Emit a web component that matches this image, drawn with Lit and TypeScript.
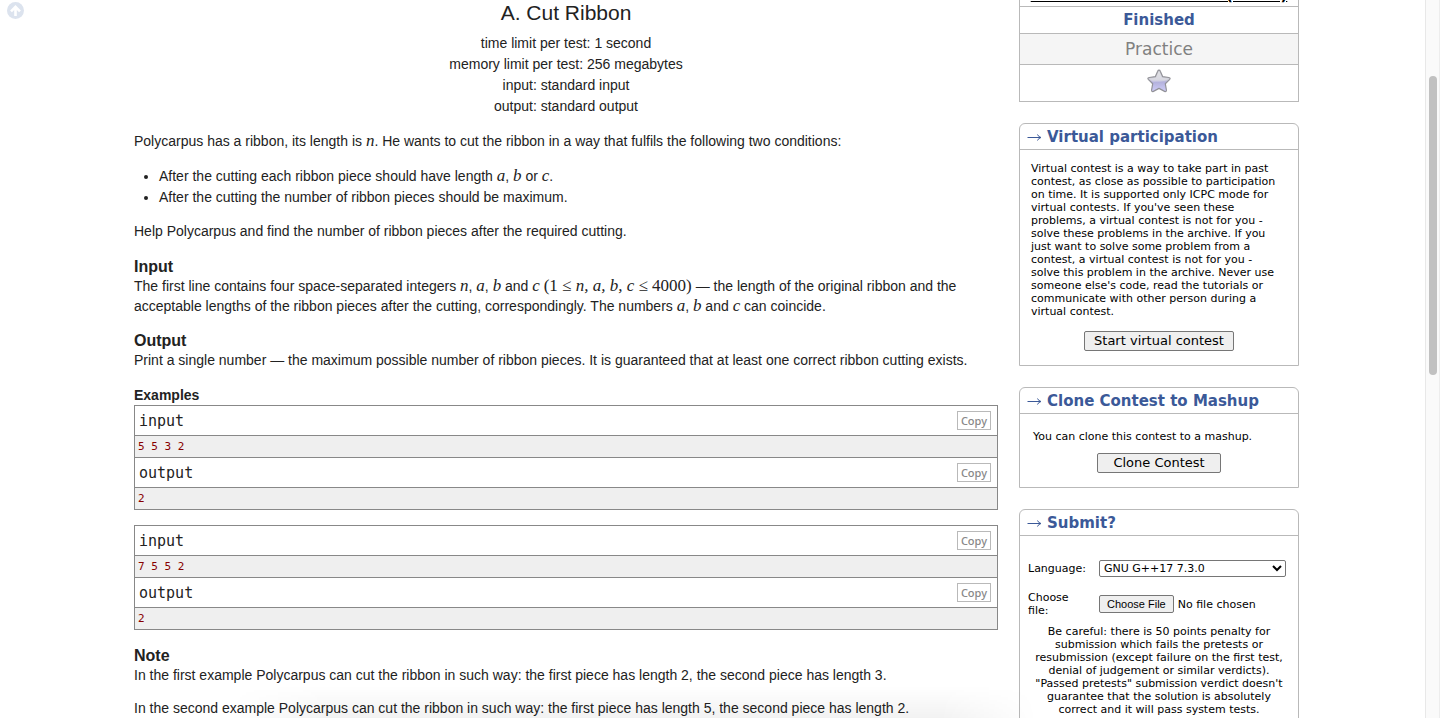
import { LitElement, html, css } from "lit";
import { customElement, state } from "lit/decorators.js";

interface Sample { input: string; output: string; }

@customElement("sample-test")
class SampleTest extends LitElement {
  static properties = { sample: { attribute: false } };
  declare sample: Sample;

  static styles = css`
    * { box-sizing: border-box; }
    :host { display: block; border: 1px solid #888; border-bottom: 0; margin-bottom: 15px; }
    .title {
      display: flex; justify-content: space-between; align-items: center;
      height: 30px; padding: 0 6px 0 4px; border-bottom: 1px solid #888;
      font: 15px/18px "DejaVu Sans Mono", monospace; color: #222;
    }
    .copy {
      border: 1px solid #b9b9b9; background: none; color: #888; padding: 0 3px;
      font: 500 11px/17px "Noto Sans", sans-serif;
    }
    pre {
      margin: 0; padding: 4px 3px; background: #efefef; color: #880000;
      border-bottom: 1px solid #888; font: 11px/13px "DejaVu Sans Mono", monospace;
    }
  `;

  section(name: string, body: string) {
    return html`
      <div class="title"><span>${name}</span><button class="copy" @click=${() => navigator.clipboard?.writeText(body)}>Copy</button></div>
      <pre>${body}</pre>`;
  }

  render() {
    return html`${this.section("input", this.sample.input)}${this.section("output", this.sample.output)}`;
  }
}

@customElement("side-box")
class SideBox extends LitElement {
  static properties = { heading: { type: String } };
  declare heading: string;

  static styles = css`
    :host { display: block; border: 1px solid #b9b9b9; border-radius: 6px 6px 0 0; margin-bottom: 21px; }
    h2 {
      display: flex; align-items: center; gap: 5px; margin: 0; padding: 3px 8px 2px 7px;
      border-bottom: 1px solid #b9b9b9; color: #3b5998;
      font: bold 15px/20px "DejaVu Sans", sans-serif;
    }
    svg { display: block; }
  `;

  render() {
    return html`
      <h2>
        <svg width="15" height="9" viewBox="0 0 15 9" fill="none" stroke="#3b5998" aria-hidden="true"><path d="M0.5 4.5H13.5M10.5 1.5Q11.5 4 14 4.5Q11.5 5 10.5 7.5"/></svg>
        ${this.heading}
      </h2>
      <slot></slot>`;
  }
}

@customElement("app-root")
class AppRoot extends LitElement {
  @state() samples: Sample[] = [
    { input: "5 5 3 2", output: "2" },
    { input: "7 5 5 2", output: "2" },
  ];

  static styles = css`
    * { box-sizing: border-box; }
    :host {
      display: grid; grid-template-columns: minmax(0, 1fr) 15px; height: 100vh;
      overflow: hidden; position: relative; background: #fff; color: #000;
      font: 11px/13px "DejaVu Sans", sans-serif;
    }
    .up { position: absolute; left: 7px; top: 2px; }
    .up svg { display: block; }
    .shade {
      position: absolute; left: 16%; right: 28%; bottom: 0; height: 32px; pointer-events: none;
      background: linear-gradient(to bottom, rgba(0, 0, 0, 0), rgba(0, 0, 0, 0.05));
      mask-image: linear-gradient(to right, transparent, #000 12%, #000 88%, transparent);
    }
    .page {
      display: grid; grid-template-columns: minmax(0, 1fr) 280px; gap: 21px;
      align-items: start; padding: 0 126px 0 134px; height: 100vh; overflow: hidden;
    }
    .track { background: #fafafa; border-left: 1px solid #e8e8e8; border-right: 1px solid #ededed; padding: 76px 3px 0; }
    .thumb { height: 299px; width: 8px; border-radius: 4px; background: #c1c1c1; }

    main { color: #222; font: 14px/21px "Liberation Sans", Arial, sans-serif; }
    .header { text-align: center; margin-bottom: 14px; }
    h1 { margin: 0; font-size: 21px; line-height: 26px; font-weight: 400; padding-bottom: 7px; }
    p { margin: 0 0 14px; }
    ul { margin: 0 0 13px; padding-left: 25px; }
    h3 { margin: 0; font-size: 16px; line-height: 18px; }
    h4 { margin: 0; font-size: 14px; line-height: 19px; }
    section { padding-top: 2px; margin-bottom: 14px; line-height: 20px; }
    section p { margin-bottom: 13px; }
    .samples { padding-top: 2px; }
    .math { font: italic 17px/18px "Liberation Serif", serif; }
    .math b { font-style: normal; font-weight: 400; }

    aside { min-width: 0; }
    .contest { border: 1px solid #b9b9b9; border-top: 0; margin-bottom: 21px; text-align: center; }
    .contest > * { border-bottom: 1px solid #b9b9b9; }
    .contest > :last-child { border-bottom: 0; }
    .name { height: 7px; display: flex; align-items: flex-end; justify-content: center; }
    .name a { color: #000; font: bold 15px/22px "DejaVu Sans", sans-serif; text-decoration: underline; white-space: nowrap; }
    .finished { color: #3b5998; font: bold 15px/26px "DejaVu Sans", sans-serif; }
    .practice { color: #808080; background: #f5f5f5; font: 17px/30px "DejaVu Sans", sans-serif; }
    .star { display: flex; justify-content: center; padding: 4px 0 8px; }
    .star svg { display: block; }

    .box { padding: 12px 16px 14px 11px; }
    .box.clone { padding: 16px 13px 14px; }
    .box.submit { padding: 24px 8px; }
    .center { display: flex; justify-content: center; }
    .action {
      border: 1px solid #767676; border-radius: 2px; background: #efefef; color: #000;
      font: 13px/18px "DejaVu Sans", sans-serif; padding: 0 9px;
    }
    .box .center { margin-top: 13px; margin-right: -5px; }
    .clone .center { margin-top: 10px; margin-right: 0; }
    .clone .action { padding: 0 15px; }
    .form { display: grid; grid-template-columns: 60px minmax(0, 1fr); column-gap: 11px; row-gap: 14px; align-items: center; margin-right: 4px; }
    select {
      width: 100%; height: 17px; border: 1px solid #767676; border-radius: 2px; background: #fff; color: #000;
      font: 11px/13px "DejaVu Sans", sans-serif; padding: 0;
    }
    input { width: 100%; font: 11px/13px "DejaVu Sans", sans-serif; color: #000; }
    input::file-selector-button {
      border: 1px solid #767676; border-radius: 2px; background: #efefef; color: #000;
      font: 11px/16px "Liberation Sans", Arial, sans-serif; padding: 0 7px; margin-right: 4px;
    }
    .warning { text-align: center; margin: 8px 0 0; }
  `;

  v(name: string) { return html`<span class="math">${name}</span>`; }

  render() {
    const v = this.v;
    return html`
      <div class="page">
        <main>
          <div class="header">
            <h1>A. Cut Ribbon</h1>
            <div>time limit per test: 1 second</div>
            <div>memory limit per test: 256 megabytes</div>
            <div>input: standard input</div>
            <div>output: standard output</div>
          </div>
          <p>Polycarpus has a ribbon, its length is ${v("n")}. He wants to cut the ribbon in a way that fulfils the following two conditions:</p>
          <ul>
            <li>After the cutting each ribbon piece should have length ${v("a")}, ${v("b")} or ${v("c")}.</li>
            <li>After the cutting the number of ribbon pieces should be maximum.</li>
          </ul>
          <p>Help Polycarpus and find the number of ribbon pieces after the required cutting.</p>
          <section>
            <h3>Input</h3>
            The first line contains four space-separated integers ${v("n")}, ${v("a")}, ${v("b")} and ${v("c")} <span class="math"><b>(1 ≤ </b>n, a, b, c<b> ≤ 4000)</b></span> — the length of the original ribbon and the acceptable lengths of the ribbon pieces after the cutting, correspondingly. The numbers ${v("a")}, ${v("b")} and ${v("c")} can coincide.
          </section>
          <section>
            <h3>Output</h3>
            Print a single number — the maximum possible number of ribbon pieces. It is guaranteed that at least one correct ribbon cutting exists.
          </section>
          <div class="samples">
            <h4>Examples</h4>
            ${this.samples.map((s) => html`<sample-test .sample=${s}></sample-test>`)}
          </div>
          <section>
            <h3>Note</h3>
            <p>In the first example Polycarpus can cut the ribbon in such way: the first piece has length 2, the second piece has length 3.</p>
            <p>In the second example Polycarpus can cut the ribbon in such way: the first piece has length 5, the second piece has length 2.</p>
          </section>
        </main>
        <aside>
          <div class="contest">
            <div class="name"><a href="#contest">Codeforces Round 119 (Div. 2)</a></div>
            <div class="finished">Finished</div>
            <div class="practice">Practice</div>
            <div class="star">
              <svg width="24" height="24" viewBox="0 0 24 24" role="img" aria-label="Favourite">
                <defs>
                  <linearGradient id="g" x1="0" y1="0" x2="0" y2="1">
                    <stop offset="0" stop-color="#dedee2"/><stop offset=".45" stop-color="#cfcfda"/><stop offset=".55" stop-color="#b3b1dc"/><stop offset="1" stop-color="#cfcdf8"/>
                  </linearGradient>
                </defs>
                <path d="M12 1.2Q12.9 1.2 13.3 2.2L15.6 7.6L21.8 8.5Q24 9 22.5 10.6L18.3 14.7L19.4 21Q19.5 23.1 17.6 22.4L12 19.4L6.4 22.4Q4.5 23.1 4.6 21L5.7 14.7L1.5 10.6Q0 9 2.2 8.5L8.4 7.6L10.7 2.2Q11.1 1.2 12 1.2Z" fill="url(#g)" stroke="#929298" stroke-width="1.2" stroke-linejoin="round"/>
                <path d="M2.6 9.8L9.2 8.8L12 2.8L14.8 8.8L21.2 9.8Q17 13.2 12 12.8Q8 12.6 5.8 13Z" fill="#fff" opacity=".2"/>
              </svg>
            </div>
          </div>
          <side-box heading="Virtual participation">
            <div class="box">
              Virtual contest is a way to take part in past contest, as close as possible to participation on time. It is supported only ICPC mode for virtual contests. If you've seen these problems, a virtual contest is not for you - solve these problems in the archive. If you just want to solve some problem from a contest, a virtual contest is not for you - solve this problem in the archive. Never use someone else's code, read the tutorials or communicate with other person during a virtual contest.
              <div class="center"><button class="action">Start virtual contest</button></div>
            </div>
          </side-box>
          <side-box heading="Clone Contest to Mashup">
            <div class="box clone">
              You can clone this contest to a mashup.
              <div class="center"><button class="action">Clone Contest</button></div>
            </div>
          </side-box>
          <side-box heading="Submit?">
            <div class="box submit">
              <div class="form">
                <label for="lang">Language:</label>
                <select id="lang"><option>GNU G++17 7.3.0</option></select>
                <label for="file">Choose file:</label>
                <input id="file" type="file">
              </div>
              <div class="warning">Be careful: there is 50 points penalty for submission which fails the pretests or resubmission (except failure on the first test, denial of judgement or similar verdicts). "Passed pretests" submission verdict doesn't guarantee that the solution is absolutely correct and it will pass system tests.</div>
            </div>
          </side-box>
        </aside>
      </div>
      <div class="track"><div class="thumb"></div></div>
      <div class="shade"></div>
      <a class="up" href="#top" aria-label="Up">
        <svg width="17" height="17" viewBox="0 0 17 17"><circle cx="8.5" cy="8.5" r="8.5" fill="#dce3ee"/><path d="M8.5 14V5.5M4 9.3L8.5 4.8L13 9.3" fill="none" stroke="#fff" stroke-width="2.6"/></svg>
      </a>`;
  }
}
